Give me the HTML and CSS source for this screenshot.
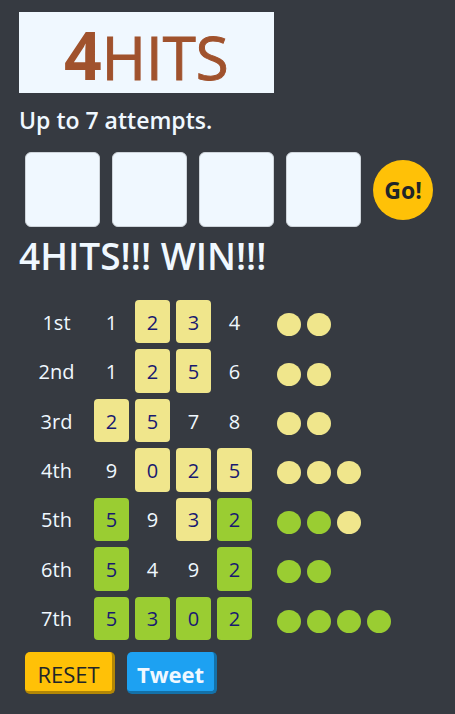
FILE: index.html
```html
<!DOCTYPE html>
<html lang="en">
<head>
<meta charset="utf-8">
<meta name="viewport" content="width=device-width, initial-scale=1">
<title>4HITS</title>
<link rel="stylesheet" href="styles.css">
</head>
<body>
<main class="game">
  <h1 class="logo"><strong>4</strong>HITS</h1>
  <p class="rule">Up to 7 attempts.</p>
  <form class="guess">
    <input class="digit" type="text" inputmode="numeric" maxlength="1" aria-label="Digit 1">
    <input class="digit" type="text" inputmode="numeric" maxlength="1" aria-label="Digit 2">
    <input class="digit" type="text" inputmode="numeric" maxlength="1" aria-label="Digit 3">
    <input class="digit" type="text" inputmode="numeric" maxlength="1" aria-label="Digit 4">
    <button class="go" type="button">Go!</button>
  </form>
  <h2 class="result">4HITS!!! WIN!!!</h2>
  <table class="history">
    <tbody>
      <tr><th scope="row">1st</th><td>1</td><td class="blow">2</td><td class="blow">3</td><td>4</td><td class="score"><div class="dots"><i class="blow"></i><i class="blow"></i></div></td></tr>
      <tr><th scope="row">2nd</th><td>1</td><td class="blow">2</td><td class="blow">5</td><td>6</td><td class="score"><div class="dots"><i class="blow"></i><i class="blow"></i></div></td></tr>
      <tr><th scope="row">3rd</th><td class="blow">2</td><td class="blow">5</td><td>7</td><td>8</td><td class="score"><div class="dots"><i class="blow"></i><i class="blow"></i></div></td></tr>
      <tr><th scope="row">4th</th><td>9</td><td class="blow">0</td><td class="blow">2</td><td class="blow">5</td><td class="score"><div class="dots"><i class="blow"></i><i class="blow"></i><i class="blow"></i></div></td></tr>
      <tr><th scope="row">5th</th><td class="hit">5</td><td>9</td><td class="blow">3</td><td class="hit">2</td><td class="score"><div class="dots"><i class="hit"></i><i class="hit"></i><i class="blow"></i></div></td></tr>
      <tr><th scope="row">6th</th><td class="hit">5</td><td>4</td><td>9</td><td class="hit">2</td><td class="score"><div class="dots"><i class="hit"></i><i class="hit"></i></div></td></tr>
      <tr><th scope="row">7th</th><td class="hit">5</td><td class="hit">3</td><td class="hit">0</td><td class="hit">2</td><td class="score"><div class="dots"><i class="hit"></i><i class="hit"></i><i class="hit"></i><i class="hit"></i></div></td></tr>
    </tbody>
  </table>
  <div class="actions">
    <button class="button reset" type="button">RESET</button>
    <button class="button tweet" type="button">Tweet</button>
  </div>
</main>
</body>
</html>
```
FILE: styles.css
```css
* {
  box-sizing: border-box;
}

body {
  margin: 0;
  background: #363a41;
  color: aliceblue;
  font-family: "Open Sans", "Noto Sans", sans-serif;
  font-size: 20px;
  line-height: 30px;
}

.game {
  padding: 12px 19px;
}

.logo {
  width: fit-content;
  margin: 0;
  padding: 9px 45px 0;
  background: aliceblue;
  color: sienna;
  font-size: 60px;
  font-weight: 400;
  line-height: 72px;
  -webkit-text-stroke: 1px sienna;
}

.logo strong {
  font-size: 66px;
  font-weight: 700;
  line-height: 1;
  -webkit-text-stroke: 0;
}

.rule {
  margin: 12px 0 17px;
  font-size: 23px;
  font-weight: 600;
}

.guess {
  display: flex;
  align-items: center;
  gap: 12px;
  padding-left: 6px;
}

.digit {
  width: 75px;
  height: 75px;
  padding: 0;
  border: 1px solid #ced4da;
  border-radius: 6px;
  background: aliceblue;
  color: midnightblue;
  font: inherit;
  font-size: 36px;
  text-align: center;
}

.go {
  width: 60px;
  height: 60px;
  padding: 0;
  border: 0;
  border-radius: 50%;
  background: #ffc107;
  color: #212529;
  font: inherit;
  font-size: 23px;
  font-weight: 700;
}

.result {
  margin: 7px 0 16px;
  font-size: 37px;
  font-weight: 600;
  line-height: 44px;
}

.history {
  height: 352px;
  border-collapse: separate;
  border-spacing: 6px;
}

.history th,
.history td {
  width: 35px;
  padding: 2px 0 0;
  border-radius: 4px;
  font-weight: 400;
  text-align: center;
}

.history th {
  width: 63px;
}

.blow {
  background: khaki;
  color: midnightblue;
}

.hit {
  background: yellowgreen;
  color: midnightblue;
}

.history .score {
  width: auto;
  padding: 6px 0 0 19px;
}

.dots {
  display: flex;
  gap: 6px;
}

.dots i {
  width: 24px;
  height: 23px;
  border-radius: 50%;
}

.actions {
  display: flex;
  gap: 12px;
  margin-top: 6px;
  padding-left: 6px;
}

.button {
  width: 90px;
  height: 42px;
  padding: 4px 0 0;
  border: 0 solid;
  border-width: 0 3px 3px 0;
  border-radius: 5px;
  font: inherit;
  font-size: 22px;
}

.reset {
  border-color: #b38705;
  background: #ffc107;
  color: #212529;
}

.tweet {
  border-color: #1471a9;
  background: #1da1f2;
  color: aliceblue;
  font-weight: 700;
}
```
